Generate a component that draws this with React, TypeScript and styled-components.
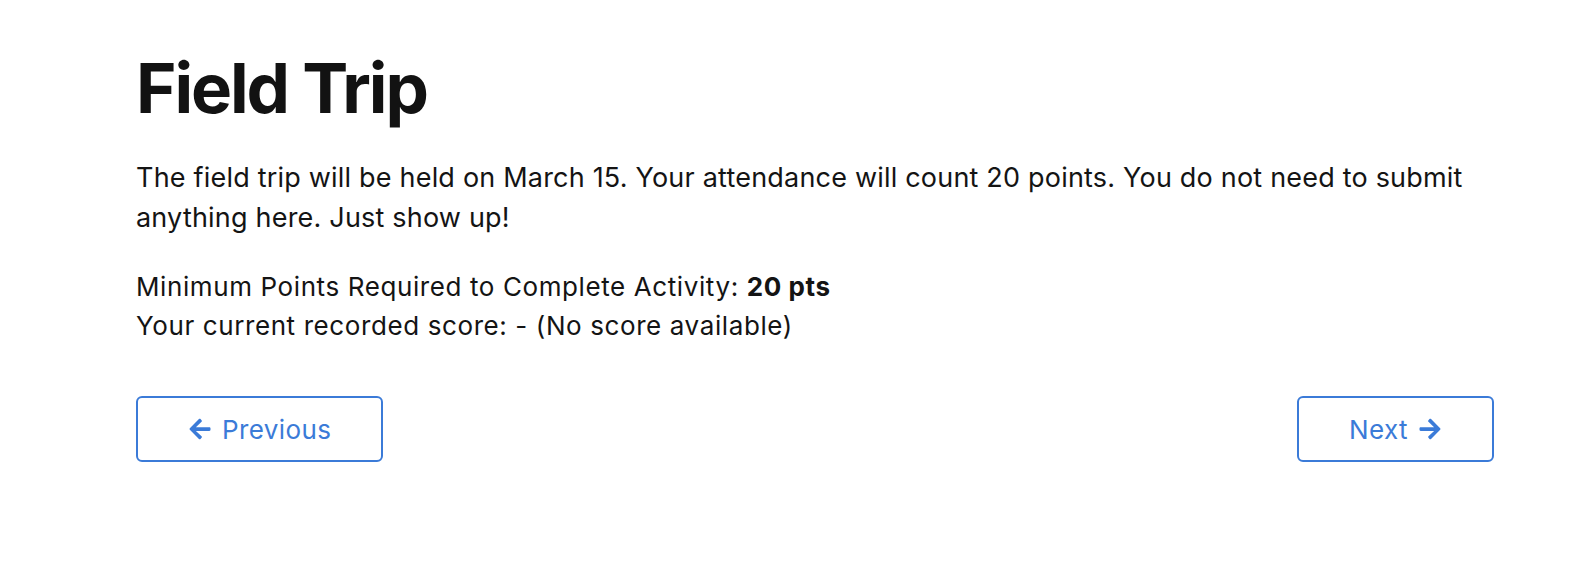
import React from "react"
import styled, { createGlobalStyle } from "styled-components"
import { FaArrowLeft, FaArrowRight } from "react-icons/fa"

const GlobalStyle = createGlobalStyle`
  body {
    margin: 0;
    background: #fff;
    font-family: Inter, "Noto Sans", sans-serif;
    color: #141414;
  }
`

const Page = styled.div`
  padding: 46px 92px 60px 136px;
`

const Title = styled.h1`
  margin: 0;
  font-size: 69px;
  line-height: 84px;
  font-weight: 700;
  letter-spacing: -2.1px;
  color: #121212;
`

const Description = styled.p`
  margin: 28px 0 0;
  font-size: 27px;
  line-height: 40px;
  letter-spacing: 0.2px;
`

const Score = styled.div`
  margin-top: 30px;
  font-size: 26px;
  line-height: 38.5px;
  letter-spacing: 0.6px;

  b {
    font-weight: 700;
  }
`

const Nav = styled.div`
  margin-top: 51px;
  display: flex;
  justify-content: space-between;
`

const NavButton = styled.button`
  display: flex;
  align-items: center;
  gap: 10px;
  height: 66px;
  padding: 0 50px;
  background: #fff;
  border: 2px solid #3b7bd8;
  border-radius: 6px;
  color: #3b7bd8;
  font-family: Inter, "Noto Sans", sans-serif;
  font-size: 26px;
  letter-spacing: 0.4px;
  cursor: pointer;

  svg {
    width: 24px;
    height: 24px;
  }
`

export default function App() {
  return (
    <>
      <GlobalStyle />
      <Page>
        <Title>Field Trip</Title>
        <Description>
          The field trip will be held on March 15. Your attendance will count 20 points. You do not need to submit anything here. Just show up!
        </Description>
        <Score>
          <div>Minimum Points Required to Complete Activity: <b>20 pts</b></div>
          <div>Your current recorded score: - (No score available)</div>
        </Score>
        <Nav>
          <NavButton>
            <FaArrowLeft />
            Previous
          </NavButton>
          <NavButton>
            Next
            <FaArrowRight />
          </NavButton>
        </Nav>
      </Page>
    </>
  )
}
